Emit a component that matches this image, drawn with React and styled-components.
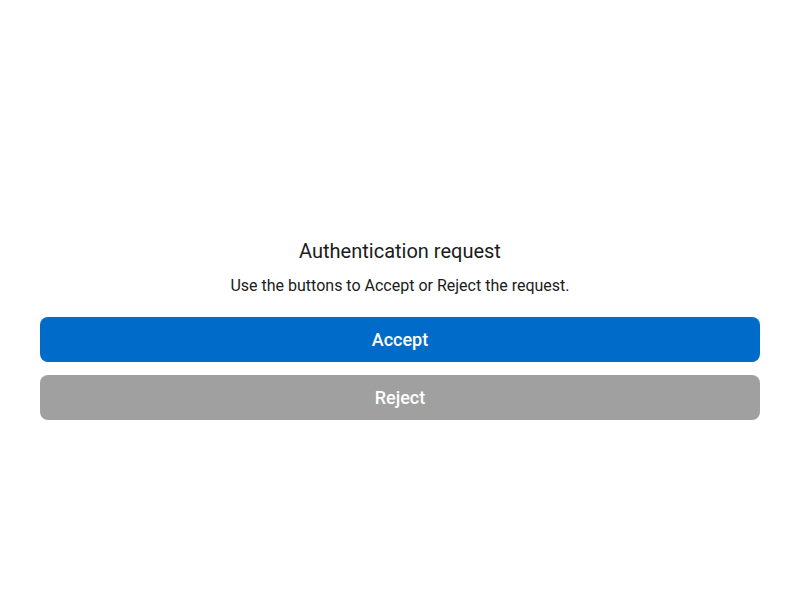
import React from "react";
import styled, { createGlobalStyle } from "styled-components";

const Global = createGlobalStyle`
  body {
    margin: 0;
    background: #ffffff;
    font-family: Roboto, "Noto Sans", sans-serif;
  }
`;

const Page = styled.div`
  width: 800px;
  height: 600px;
  box-sizing: border-box;
  padding: 238px 40px 0 40px;
  display: flex;
  flex-direction: column;
  align-items: center;
`;

const Title = styled.h1`
  margin: 0;
  font-size: 20px;
  line-height: 26px;
  font-weight: 400;
  color: #1b1b1b;
`;

const Subtitle = styled.p`
  margin: 12px 0 0 0;
  font-size: 16px;
  line-height: 20px;
  color: #1b1b1b;
`;

const Actions = styled.div`
  width: 100%;
  margin-top: 21px;
  display: flex;
  flex-direction: column;
  gap: 13px;
`;

const Button = styled.button`
  width: 100%;
  height: 45px;
  border: none;
  border-radius: 8px;
  background: ${(p) => (p.$variant === "reject" ? "#a0a0a0" : "#006bc8")};
  color: #ffffff;
  font-family: Roboto, "Noto Sans", sans-serif;
  font-size: 18px;
  font-weight: 500;
  cursor: pointer;
`;

const App = () => {
  return (
    <>
      <Global />
      <Page>
        <Title>Authentication request</Title>
        <Subtitle>Use the buttons to Accept or Reject the request.</Subtitle>
        <Actions>
          <Button>Accept</Button>
          <Button $variant="reject">Reject</Button>
        </Actions>
      </Page>
    </>
  );
};

export default App;
